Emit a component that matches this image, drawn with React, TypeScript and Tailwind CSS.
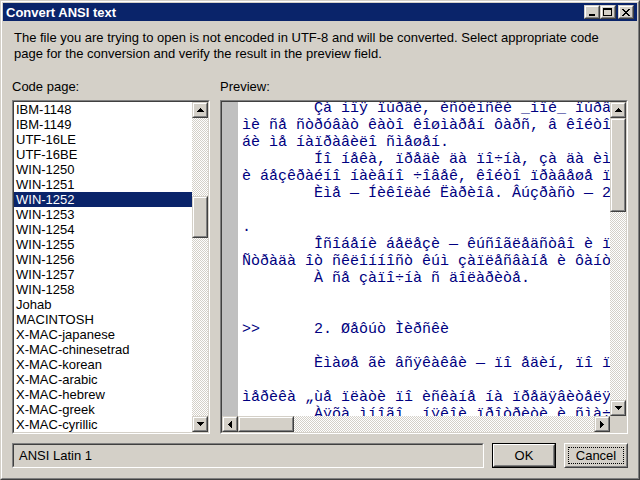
import React from "react";

const checker =
  "bg-[image:repeating-conic-gradient(#ffffff_0%_25%,#d4d0c8_0%_50%)] bg-[length:2px_2px]";

function Raised({
  className,
  children,
}: {
  className: string;
  children?: React.ReactNode;
}) {
  return (
    <div
      className={
        "border border-t-[#d4d0c8] border-l-[#d4d0c8] border-r-[#404040] border-b-[#404040] " +
        className
      }
    >
      <div className="w-full h-full border border-t-white border-l-white border-r-[#808080] border-b-[#808080] bg-[#d4d0c8] flex items-center justify-center">
        {children}
      </div>
    </div>
  );
}

const ArrowUp = () => (
  <svg width="7" height="4" viewBox="0 0 7 4" shapeRendering="crispEdges">
    <path d="M3 0h1v1h1v1h1v1h1v1H0V3h1V2h1V1h1z" fill="#000" />
  </svg>
);
const ArrowDown = () => (
  <svg width="7" height="4" viewBox="0 0 7 4" shapeRendering="crispEdges">
    <path d="M0 0h7v1H6v1H5v1H4v1H3V3H2V2H1V1H0z" fill="#000" />
  </svg>
);
const ArrowLeft = () => (
  <svg width="4" height="7" viewBox="0 0 4 7" shapeRendering="crispEdges">
    <path d="M3 0h1v7H3V6H2V5H1V4H0V3h1V2h1V1h1z" fill="#000" />
  </svg>
);
const ArrowRight = () => (
  <svg width="4" height="7" viewBox="0 0 4 7" shapeRendering="crispEdges">
    <path d="M0 0h1v1h1v1h1v1h1v1H3v1H2v1H1v1H0z" fill="#000" />
  </svg>
);

const MinIcon = () => (
  <svg width="10" height="10" viewBox="0 0 10 10" shapeRendering="crispEdges">
    <rect x="2" y="7" width="6" height="2" fill="#000" />
  </svg>
);
const MaxIcon = () => (
  <svg width="10" height="10" viewBox="0 0 10 10" shapeRendering="crispEdges">
    <rect x="0.5" y="1.5" width="8" height="7" fill="none" stroke="#000" />
    <rect x="0" y="1" width="9" height="2" fill="#000" />
  </svg>
);
const CloseIcon = () => (
  <svg width="8" height="7" viewBox="0 0 8 7" shapeRendering="crispEdges">
    <path
      d="M0 0h2v1h1v1h2V1h1V0h2v1H7v1H6v1H5v1h1v1h1v1h1v1H6V6H5V5H3v1H2v1H0V6h1V5h1V4h1V3H2V2H1V1H0z"
      fill="#000"
    />
  </svg>
);

const codePages = [
  "IBM-1148",
  "IBM-1149",
  "UTF-16LE",
  "UTF-16BE",
  "WIN-1250",
  "WIN-1251",
  "WIN-1252",
  "WIN-1253",
  "WIN-1254",
  "WIN-1255",
  "WIN-1256",
  "WIN-1257",
  "WIN-1258",
  "Johab",
  "MACINTOSH",
  "X-MAC-japanese",
  "X-MAC-chinesetrad",
  "X-MAC-korean",
  "X-MAC-arabic",
  "X-MAC-hebrew",
  "X-MAC-greek",
  "X-MAC-cyrillic",
];

const lines = [
  "\tÇà ìîÿ ïúðâè, èñòèíñêè _ìîé_ ïúðâè ïàðè",
  "ìè ñå ñòðóâàò êàòî êîøìàðåí ôàðñ, â êîéòî ñúì",
  "áè ìå íàïðàâèëî ñìåøåí.",
  "\tÍî íåêà, ïðåäè äà ïî÷íà, çà äà èì",
  "è áåçêðàéíî íàèâíî ÷îâåê, êîéòî ïðàâåøå ïúðâèòå",
  "\tÈìå — Íèêîëàé Ëàðèîâ. Âúçðàñò — 27",
  "",
  ".",
  "\tÎñîáåíè áåëåçè — êúñîãëåäñòâî è ïðîñòîäóøèå",
  "Ñòðàäà îò ñêëîííîñò êúì çàïëåñâàíå è ôàíòàçèè",
  "\tÀ ñå çàïî÷íà ñ äîëàðèòå.",
  "",
  "",
  ">>\t2. Øåôúò Ìèðñêè",
  "",
  "\tÈìàøå ãè âñÿêàêâè — ïî åäèí, ïî ïåò",
  "",
  "ìåðèêà „ùå ïëàòè ïî èñêàíå íà ïðåäÿâèòåëÿ",
  "\tÀÿõà ìíîãî, íÿêîè ïðîòðèòè è ñìà÷êàíè",
];

function Sunken({
  className,
  innerClassName,
  children,
}: {
  className: string;
  innerClassName: string;
  children?: React.ReactNode;
}) {
  return (
    <div
      className={
        "border border-t-[#808080] border-l-[#808080] border-r-white border-b-white " +
        className
      }
    >
      <div
        className={
          "w-full h-full border border-t-[#404040] border-l-[#404040] border-r-[#d4d0c8] border-b-[#d4d0c8] " +
          innerClassName
        }
      >
        {children}
      </div>
    </div>
  );
}

export default function App() {
  return (
    <div className="w-[640px] h-[480px] bg-[#d4d0c8] border border-t-[#d4d0c8] border-l-[#d4d0c8] border-r-[#404040] border-b-[#404040] font-['Liberation_Sans',Arial,sans-serif] text-[13px] text-black overflow-hidden">
      <div className="h-full border border-t-white border-l-white border-r-[#808080] border-b-[#808080] p-px flex flex-col">
        {/* Title bar */}
        <div className="h-[18px] bg-[#0a246a] flex items-center justify-between pl-[3px] pr-[3px]">
          <span className="text-white font-bold text-[13px] leading-[16px] pt-[1px]">
            Convert ANSI text
          </span>
          <div className="flex items-center">
            <Raised className="w-[16px] h-[14px]">
              <MinIcon />
            </Raised>
            <Raised className="w-[16px] h-[14px]">
              <MaxIcon />
            </Raised>
            <Raised className="w-[16px] h-[14px] ml-[2px]">
              <CloseIcon />
            </Raised>
          </div>
        </div>

        {/* Content */}
        <div className="flex-1 flex flex-col px-[9px] pt-[9px] pb-[9px]">
          <p className="px-[2px] leading-[16px]">
            The file you are trying to open is not encoded in UTF-8 and will be
            converted. Select appropriate code
            <br />
            page for the conversion and verify the result in the preview field.
          </p>

          <div className="flex gap-[10px] mt-[17px]">
            {/* Code page column */}
            <div className="w-[198px] flex flex-col">
              <div className="leading-[16px] h-[16px] mb-[5px]">Code page:</div>
              <Sunken className="w-[198px] h-[334px]" innerClassName="flex bg-white">
                <div className="flex-1 flex flex-col">
                  {codePages.map((c) =>
                    c === "WIN-1252" ? (
                      <div
                        key={c}
                        className="h-[15px] leading-[15px] pl-[2px] bg-[#0a246a] text-white"
                      >
                        {c}
                      </div>
                    ) : (
                      <div key={c} className="h-[15px] leading-[15px] pl-[2px]">
                        {c}
                      </div>
                    )
                  )}
                </div>
                <div className="w-[16px] flex flex-col">
                  <Raised className="w-[16px] h-[16px] shrink-0">
                    <ArrowUp />
                  </Raised>
                  <div className={"h-[78px] shrink-0 " + checker} />
                  <Raised className="w-[16px] h-[42px] shrink-0" />
                  <div className={"flex-1 " + checker} />
                  <Raised className="w-[16px] h-[16px] shrink-0">
                    <ArrowDown />
                  </Raised>
                </div>
              </Sunken>
            </div>

            {/* Preview column */}
            <div className="w-[408px] flex flex-col">
              <div className="leading-[16px] h-[16px] mb-[5px]">Preview:</div>
              <Sunken className="w-[408px] h-[334px]" innerClassName="flex flex-col">
                <div className="flex-1 flex min-h-0">
                  <div className="w-[16px] bg-[#c0c0c0] shrink-0" />
                  <div className="flex-1 bg-white overflow-hidden pl-[4px]">
                    <div className="-mt-[2px] font-['Liberation_Mono','DejaVu_Sans_Mono',monospace] text-[15px] leading-[17px] text-[#000080] whitespace-pre [tab-size:8]">
                      {lines.map((l, i) => (
                        <div key={i} className="h-[17px]">
                          {l}
                        </div>
                      ))}
                    </div>
                  </div>
                  <div className="w-[16px] flex flex-col shrink-0">
                    <Raised className="w-[16px] h-[16px] shrink-0">
                      <ArrowUp />
                    </Raised>
                    <Raised className="w-[16px] h-[94px] shrink-0" />
                    <div className={"flex-1 " + checker} />
                    <Raised className="w-[16px] h-[16px] shrink-0">
                      <ArrowDown />
                    </Raised>
                  </div>
                </div>
                <div className="h-[16px] flex shrink-0">
                  <Raised className="w-[16px] h-[16px] shrink-0">
                    <ArrowLeft />
                  </Raised>
                  <Raised className="w-[56px] h-[16px] shrink-0" />
                  <div className={"flex-1 " + checker} />
                  <Raised className="w-[16px] h-[16px] shrink-0">
                    <ArrowRight />
                  </Raised>
                  <div className="w-[16px] h-[16px] bg-[#d4d0c8] shrink-0" />
                </div>
              </Sunken>
            </div>
          </div>

          {/* Bottom row */}
          <div className="flex gap-[8px] mt-[9px] h-[25px]">
            <Sunken className="w-[472px] h-[25px]" innerClassName="flex items-center pl-[5px]">
              <span className="leading-[16px]">ANSI Latin 1</span>
            </Sunken>
            <div className="w-[64px] h-[25px] border border-black">
              <div className="w-full h-full border border-t-white border-l-white border-r-[#404040] border-b-[#404040]">
                <div className="w-full h-full border border-t-[#d4d0c8] border-l-[#d4d0c8] border-r-[#808080] border-b-[#808080] flex items-center justify-center leading-[16px]">
                  OK
                </div>
              </div>
            </div>
            <div className="w-[64px] h-[25px] border border-t-white border-l-white border-r-[#404040] border-b-[#404040]">
              <div className="w-full h-full border border-t-[#d4d0c8] border-l-[#d4d0c8] border-r-[#808080] border-b-[#808080] p-[2px]">
                <div className="w-full h-full border border-dotted border-black flex items-center justify-center leading-[16px]">
                  Cancel
                </div>
              </div>
            </div>
          </div>
        </div>
      </div>
    </div>
  );
}
